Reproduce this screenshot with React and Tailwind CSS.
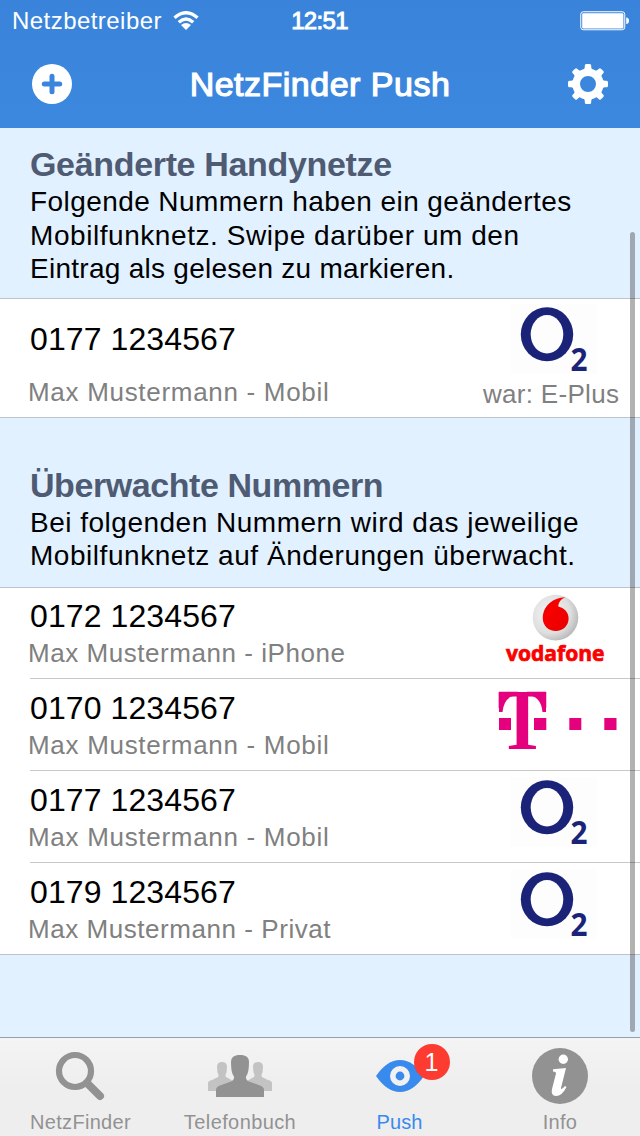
import React from "react";

function O2Logo({ top, height }) {
  return (
    <svg width="160" height={height} viewBox={`0 ${-top} 160 ${height}`} className="block shrink-0 overflow-visible">
      <rect x="31" y="0" width="86" height="70" fill="#fdfdfe" />
      <ellipse cx="67" cy="30.300" rx="26.200" ry="27" fill="#1a2378" />
      <ellipse cx="67" cy="30.300" rx="16.300" ry="19.200" fill="#fdfdfe" />
      <text transform="translate(90.600 67.300) scale(0.93 1)" fontFamily="Open Sans, sans-serif" fontWeight="700" fontSize="32" fill="#1a2378">2</text>
    </svg>
  );
}

function VodafoneLogo() {
  return (
    <svg width="160" height="90" viewBox="480 588 160 90" className="block shrink-0">
      <defs>
        <radialGradient id="ball" cx="0.380" cy="0.400" r="0.750">
          <stop offset="0" stopColor="#f6f6f6" />
          <stop offset="0.600" stopColor="#dedede" />
          <stop offset="1" stopColor="#a5a5a5" />
        </radialGradient>
        <linearGradient id="drop" x1="0" y1="0" x2="1" y2="1">
          <stop offset="0" stopColor="#b80000" />
          <stop offset="0.300" stopColor="#f80000" />
          <stop offset="1" stopColor="#e80000" />
        </linearGradient>
      </defs>
      <circle cx="555.500" cy="617.600" r="22.800" fill="url(#ball)" />
      <path d="M565.500 597.200C553 597.500 542.800 606 542.800 618.200C542.800 625.500 548.500 631 555.800 631C563 631 568.600 625.500 568.600 618.500C568.600 612 564 608 558.300 606.600C558.200 602.500 561 598.700 565.500 597.200Z" fill="url(#drop)" />
      <text x="506" y="661.300" textLength="98.500" lengthAdjust="spacingAndGlyphs" fontFamily="Open Sans, sans-serif" fontWeight="700" fontSize="21" fill="#fb0000" stroke="#fb0000" strokeWidth="0.700">vodafone</text>
    </svg>
  );
}

function TelekomLogo() {
  return (
    <svg width="160" height="91" viewBox="480 679 160 91" className="block shrink-0 overflow-visible" fill="#e5007d">
      <text transform="translate(522.500 749.300) scale(0.860 1)" textAnchor="middle" fontFamily="Liberation Serif, serif" fontWeight="700" fontSize="87">T</text>
      <path d="M499 691.800H518V694.500Q504 696 502.500 712H499Z" />
      <path d="M546 691.800H527V694.500Q541 696 542.500 712H546Z" />
      <rect x="499" y="718" width="12" height="12" />
      <rect x="534" y="718" width="12.300" height="12" />
      <rect x="569.300" y="718" width="12" height="12" />
      <rect x="604.300" y="718" width="12.200" height="12" />
    </svg>
  );
}

function NumberText({ children }) {
  return <div className="text-[32px] leading-[36px] tracking-[0.1px] text-black">{children}</div>;
}

function NameText({ children, spacing = "tracking-[0.7px]" }) {
  return <div className={"-ml-[2px] text-[26px] leading-[30px] text-[#808080] " + spacing}>{children}</div>;
}

function Row({ number, name, spacing, logo, first, last }) {
  return (
    <div className={last ? "border-b border-[#bcc3cc] pl-[30px]" : "pl-[30px]"}>
      <div className={"flex justify-between " + (first || last ? "h-[91px] " : "h-[92px] ") + (last ? "" : "border-b border-[#c8c7cc]")}>
        <div className="flex flex-col justify-end gap-[4px] pb-[10px]">
          <NumberText>{number}</NumberText>
          <NameText spacing={spacing}>{name}</NameText>
        </div>
        {logo}
      </div>
    </div>
  );
}

function Section({ title, titleSpacing, lines, className }) {
  return (
    <div className={"pl-[30px] " + className}>
      <h2 className={"text-[34px] font-bold leading-[38px] text-[#4e5b73] " + titleSpacing}>{title}</h2>
      <div className="pt-[2px] text-[28px] text-black">
        {lines.map(([text, spacing]) => (
          <p key={text} className={"whitespace-nowrap " + spacing}>{text}</p>
        ))}
      </div>
    </div>
  );
}

function Gear() {
  return (
    <svg width="40" height="40" viewBox="-20 -20 40 40">
      <circle r="11.800" fill="none" stroke="#fff" strokeWidth="7.600" />
      {[0, 45, 90, 135, 180, 225, 270, 315].map((a) => (
        <path key={a} transform={`rotate(${a})`} d="M-5.500 -13.500Q-3.200 -14.500 -3.200 -17V-18.500Q-3.200 -20 -1.700 -20H1.700Q3.200 -20 3.200 -18.500V-17Q3.200 -14.500 5.500 -13.500Z" fill="#fff" />
      ))}
    </svg>
  );
}

function Tab({ label, spacing, className, children }) {
  return (
    <div className={"flex w-[160px] flex-col items-center " + className}>
      <svg width="160" height="72" viewBox="0 0 160 72" className="block">{children}</svg>
      <span className={"text-[20px] leading-[24px] " + spacing}>{label}</span>
    </div>
  );
}

export default function App() {
  return (
    <div className="relative flex h-[1136px] w-[640px] flex-col overflow-hidden bg-[#e2f1ff] font-['Liberation_Sans',Arial,sans-serif]">
      <header className="h-[128px] bg-linear-to-b from-[#3984da] to-[#3d88df] text-white">
        <div className="flex h-[41px] items-center justify-between pl-[12px] pr-[10px]">
          <div className="flex w-[260px] items-center gap-[11px]">
            <span className="text-[24px] leading-[42px] tracking-[0.45px]">Netzbetreiber</span>
            <svg width="26" height="20" viewBox="0 0 26 20" fill="none" stroke="#fff" strokeWidth="3.400">
              <path d="M1.500 6.700Q13 -3.200 24.500 6.700" />
              <path d="M5.800 11.200Q13 4.900 20.200 11.200" />
              <path d="M8 14Q13 9.800 18 14L13 19Z" fill="#fff" stroke="none" />
            </svg>
          </div>
          <span className="pr-[3px] text-[24px] leading-[42px] tracking-[-0.700px] [-webkit-text-stroke:0.900px_white]">12:51</span>
          <div className="flex w-[260px] items-center justify-end">
            <svg width="50" height="20" viewBox="0 0 50 20">
              <rect x="0.750" y="0.750" width="44" height="18" rx="2.500" fill="none" stroke="#fff" />
              <rect x="2.200" y="2.200" width="41.200" height="15.200" rx="1.200" fill="#fff" />
              <path d="M46.200 6.500Q49 6.700 49 9.700T46.200 13Z" fill="#fff" />
            </svg>
          </div>
        </div>
        <div className="flex h-[86px] items-center justify-between px-[32px]">
          <svg width="40" height="40" viewBox="0 0 40 40">
            <circle cx="20" cy="20" r="20" fill="#fff" />
            <path d="M20 12.300V27.700M12.300 20H27.700" stroke="#3b86dc" strokeWidth="5" strokeLinecap="round" />
          </svg>
          <h1 className="text-[34px] leading-[40px] tracking-[0.500px] [-webkit-text-stroke:1.200px_white]">NetzFinder Push</h1>
          <Gear />
        </div>
      </header>

      <main className="flex-1">
        <Section
          className="h-[170px] pt-[17px] leading-[33.500px]"
          title="Geänderte Handynetze"
          titleSpacing="tracking-[-0.330px]"
          lines={[
            ["Folgende Nummern haben ein geändertes", "tracking-[0.420px]"],
            ["Mobilfunknetz. Swipe darüber um den", "tracking-[0.560px]"],
            ["Eintrag als gelesen zu markieren.", "tracking-[0.270px]"],
          ]}
        />
        <div className="flex h-[120px] justify-between border-y border-[#bcc3cc] bg-white pl-[30px]">
          <div className="flex flex-col gap-[20px] pt-[22px]">
            <NumberText>0177 1234567</NumberText>
            <NameText>Max Mustermann - Mobil</NameText>
          </div>
          <div className="flex w-[160px] flex-col">
            <O2Logo top={5} height={80} />
            <span className="whitespace-nowrap pl-[3px] text-[26px] leading-[30px] tracking-[0.300px] text-[#808080]">war: E-Plus</span>
          </div>
        </div>
        <Section
          className="h-[169px] pt-[48px] leading-[33px]"
          title="Überwachte Nummern"
          titleSpacing="tracking-[-0.430px]"
          lines={[
            ["Bei folgenden Nummern wird das jeweilige", "tracking-[0.500px]"],
            ["Mobilfunknetz auf Änderungen überwacht.", "tracking-[0.540px]"],
          ]}
        />
        <div className="border-t border-[#bcc3cc] bg-white">
          <Row first number="0172 1234567" name="Max Mustermann - iPhone" spacing="tracking-[0.550px]" logo={<VodafoneLogo />} />
          <Row number="0170 1234567" name="Max Mustermann - Mobil" logo={<TelekomLogo />} />
          <Row number="0177 1234567" name="Max Mustermann - Mobil" logo={<O2Logo top={6} height={90} />} />
          <Row last number="0179 1234567" name="Max Mustermann - Privat" spacing="tracking-[0.550px]" logo={<O2Logo top={6} height={90} />} />
        </div>
      </main>

      <nav className="flex h-[99px] border-t border-[#979eaa] bg-linear-to-b from-[#f4f4f4] via-[#eeeeee] to-[#eeeeee]">
        <Tab label="NetzFinder" spacing="pl-[1px] tracking-[0.3px]" className="text-[#929292]">
          <circle cx="75" cy="33" r="16" fill="none" stroke="#929292" strokeWidth="6.200" />
          <path d="M88 46L100 58" stroke="#929292" strokeWidth="8" strokeLinecap="round" />
        </Tab>
        <Tab label="Telefonbuch" spacing="tracking-[0.4px]" className="text-[#929292]">
          <g fill="#c3c3c3">
            <path d="M48 53V45Q48 43 52 42L56 40Q59 39 58.500 37Q57 34 57 29Q57 24 62 24Q67 24 67 29Q67 34 65.500 37Q65 39 68 40L76 45V53Z" />
            <path d="M112 53V45Q112 43 108 42L104 40Q101 39 101.500 37Q103 34 103 29Q103 24 98 24Q93 24 93 29Q93 34 94.500 37Q95 39 92 40L84 45V53Z" />
          </g>
          <path d="M56 59V52Q56 49 60 47.500L71 43.500Q74.500 42 74 38.500C71.500 35 71.200 31 71 24.500C71 19 74 17 80 17C86 17 89 19 89 24.500C88.800 31 88.500 35 86 38.500Q85.500 42 89 43.500L100 47.500Q104 49 104 52V59Z" fill="#929292" />
        </Tab>
        <Tab label="Push" spacing="-ml-[1px] tracking-[0.1px]" className="text-[#388aed]">
          <path d="M56 38Q67 22 80 22T104 38Q93 54 80 54T56 38Z" fill="#388aed" />
          <circle cx="80" cy="38" r="7.200" fill="#388aed" stroke="#f1f1f1" strokeWidth="5.600" />
          <circle cx="112" cy="24" r="18" fill="#fe3b30" />
          <text x="111.500" y="33" textAnchor="middle" fontSize="25" fill="#fff">1</text>
        </Tab>
        <Tab label="Info" spacing="tracking-[0.3px]" className="text-[#929292]">
          <circle cx="80" cy="38" r="28" fill="#929292" />
          <circle cx="83.300" cy="21.300" r="4.700" fill="#fff" />
          <path d="M73 31.200L86 30L81 50Q81 52.500 85 48L86.500 49Q82 58 76 58Q70.500 57.500 72 51L76 35.500Q76 33.500 73 33.500Z" fill="#fff" />
        </Tab>
      </nav>

      <div className="absolute left-[630px] top-[232px] h-[800px] w-[5px] rounded-full bg-black/30" />
    </div>
  );
}
